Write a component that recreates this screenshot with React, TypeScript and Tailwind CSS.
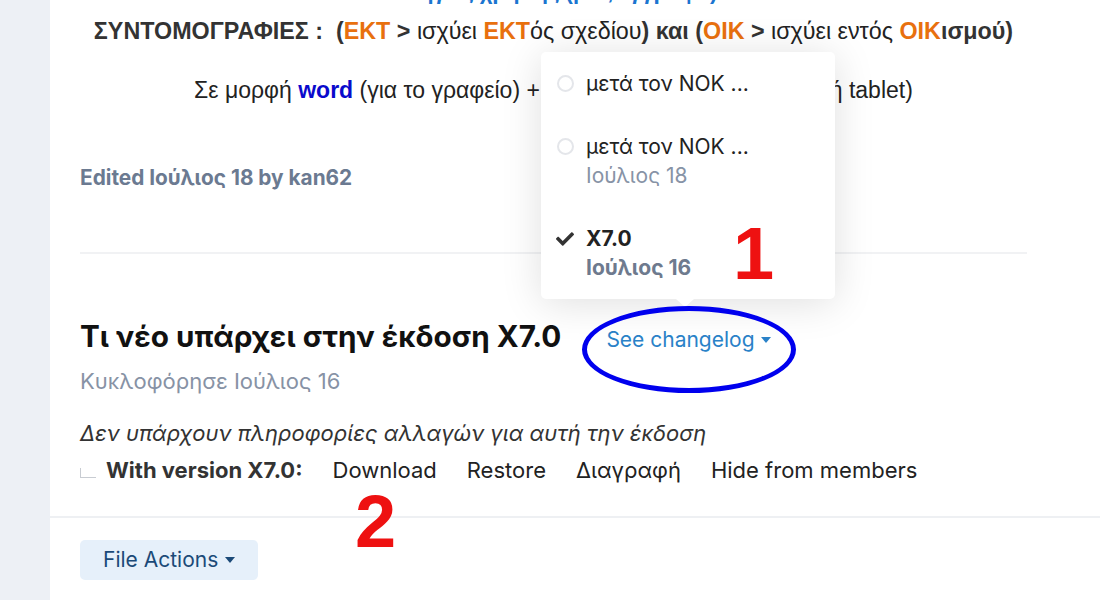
import React from 'react';

const UI = { fontFamily: 'Inter, "Noto Sans", sans-serif' };
const ARTICLE = { fontFamily: '"Liberation Sans", Arial, sans-serif' };

function Caret({ className }: { className: string }) {
  return (
    <svg viewBox="0 0 10 6" className={className} fill="currentColor">
      <path d="M0 0h10L5 6z" />
    </svg>
  );
}

function Check() {
  return (
    <svg viewBox="0 0 512 512" className="w-[18px] h-[18px] text-[#333]" fill="currentColor">
      <path d="M173.9 439.4l-166.4-166.4c-10-10-10-26.2 0-36.2l36.2-36.2c10-10 26.2-10 36.2 0L192 312.7 432.1 72.6c10-10 26.2-10 36.2 0l36.2 36.2c10 10 10 26.2 0 36.2L210.1 439.4c-10 10-26.2 10-36.2 0z" />
    </svg>
  );
}

function VersionItem({
  title,
  date,
  current,
}: {
  title: string;
  date?: string;
  current?: boolean;
}) {
  return (
    <div className="flex items-start gap-[12px] px-[15px] py-[17px] leading-[29px] text-[21px]">
      <div className="w-[18px] h-[29px] flex items-center justify-center shrink-0">
        {current ? (
          <Check />
        ) : (
          <span className="block w-[17px] h-[17px] rounded-full border-2 border-[#e4e6ea]" />
        )}
      </div>
      <div>
        <div className={current ? 'font-bold text-[#222]' : 'text-[#222]'}>{title}</div>
        {date && (
          <div className={current ? 'font-bold text-[#6e7a8e]' : 'text-[#8793a6]'}>{date}</div>
        )}
      </div>
    </div>
  );
}

export default function App() {
  return (
    <div className="flex w-[1100px] h-[600px] overflow-hidden bg-white" style={UI}>
      <div className="w-[50px] shrink-0 bg-[#edf0f5]" />

      <div className="relative flex-1 bg-white">
        {/* article body */}
        <div className="px-[30px] pr-[73px]">
          <div className="h-[5px] overflow-hidden text-center">
            <div
              className="-mt-[21px] text-[22px] font-bold text-[#1b75d0] leading-[26px]"
              style={ARTICLE}
            >
              Οδηγίες χρήσης (pdf, έγγραφο)
            </div>
          </div>

          <p className="mt-[12px] text-center text-[23.3px] leading-[28px] text-[#222] whitespace-nowrap" style={ARTICLE}>
            <b className="text-[#333]">ΣΥΝΤΟΜΟΓΡΑΦΙΕΣ :&nbsp; (</b>
            <b className="text-[#e8700e]">ΕΚΤ</b>
            <b className="text-[#333]"> &gt;</b> ισχύει <b className="text-[#e8700e]">ΕΚΤ</b>ός σχεδίου
            <b className="text-[#333]">) και (</b>
            <b className="text-[#e8700e]">ΟΙΚ</b>
            <b className="text-[#333]"> &gt;</b> ισχύει εντός <b className="text-[#e8700e]">ΟΙΚ</b>
            <b className="text-[#333]">ισμού)</b>
          </p>

          <p className="mt-[31px] text-center text-[23px] leading-[28px] text-[#222] whitespace-nowrap" style={ARTICLE}>
            Σε μορφή <b className="text-[#0a0acc]">word</b> (για το γραφείο) + σε μορφή pdf (για το κινητό ή tablet)
          </p>

          <div className="mt-[61px] text-[20.8px] leading-[26px] font-bold text-[#6b7a91]">
            Edited Ιούλιος 18 by kan62
          </div>

          <div className="mt-[61px] h-[2px] bg-[#f1f2f4]" />

          <div className="mt-[64px] flex items-baseline gap-[45px]">
            <h2 className="text-[29.7px] leading-[36px] font-bold text-[#111]">
              Τι νέο υπάρχει στην έκδοση X7.0
            </h2>
            <button className="flex items-center gap-[6px] text-[21px] text-[#2a82c8]">
              See changelog
              <Caret className="w-[10px] h-[6px]" />
            </button>
          </div>

          <div className="mt-[11px] text-[22px] leading-[28px] text-[#8792a5]">
            Κυκλοφόρησε Ιούλιος 16
          </div>

          <div className="mt-[24px] text-[22px] leading-[28px] italic text-[#333]">
            Δεν υπάρχουν πληροφορίες αλλαγών για αυτή την έκδοση
          </div>

          <div className="mt-[9px] flex items-center text-[22px] leading-[28px] text-[#222]">
            <span className="w-[16px] h-[10px] mt-[6px] border-l border-b border-[#c8ccd2]" />
            <b className="ml-[10px] text-[#333]">With version X7.0:</b>
            <div className="ml-[30px] flex gap-[30px]">
              <span>Download</span>
              <span>Restore</span>
              <span>Διαγραφή</span>
              <span>Hide from members</span>
            </div>
          </div>
        </div>

        <div className="mt-[32px] h-[2px] bg-[#eef0f3]" />

        <div className="px-[30px] pt-[22px]">
          <button className="flex items-center gap-[7px] h-[40px] px-[23px] rounded-[5px] bg-[#e6f0fa] text-[21px] text-[#1b4a78]">
            File Actions
            <Caret className="w-[10px] h-[6px]" />
          </button>
        </div>

        {/* changelog dropdown */}
        <div className="absolute left-[491px] top-[52px] w-[294px] rounded-[5px] bg-white shadow-[0_4px_40px_rgba(0,0,0,0.13)]">
          <VersionItem title="μετά τον ΝΟΚ ..." />
          <VersionItem title="μετά τον ΝΟΚ ..." date="Ιούλιος 18" />
          <VersionItem title="X7.0" date="Ιούλιος 16" current />
          <div className="absolute left-[135px] -bottom-[8px] w-0 h-0 border-l-[9px] border-r-[9px] border-t-[8px] border-l-transparent border-r-transparent border-t-white" />
        </div>

        {/* annotations */}
        <div className="absolute left-[532px] top-[306px] w-[214px] h-[87px] rounded-[50%] border-[5px] border-[#0000ee]" />
        <div
          className="absolute left-[683px] top-[214px] text-[74px] leading-[80px] font-bold text-[#ee1111]"
          style={ARTICLE}
        >
          1
        </div>
        <div
          className="absolute left-[305px] top-[482px] text-[74px] leading-[80px] font-bold text-[#ee1111]"
          style={ARTICLE}
        >
          2
        </div>
      </div>
    </div>
  );
}
